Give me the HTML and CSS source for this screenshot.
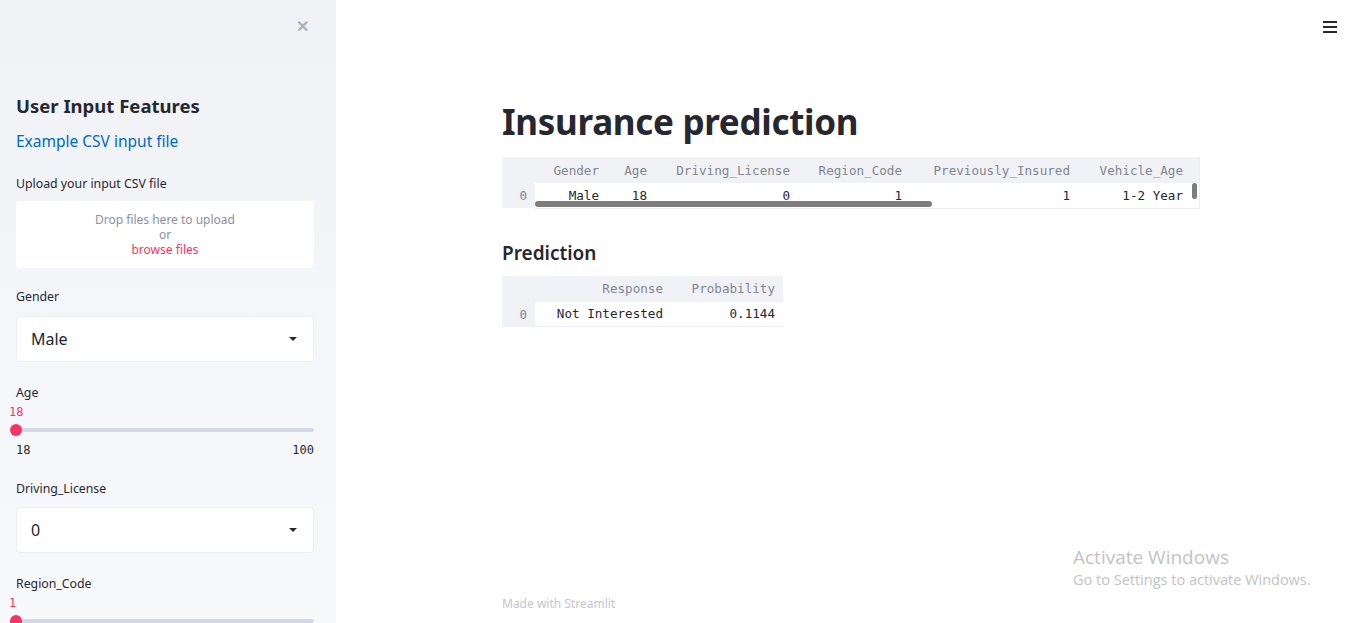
FILE: index.html
```html
<!DOCTYPE html>
<html>
<head>
<meta charset="utf-8">
<link rel="stylesheet" href="styles.css">
</head>
<body>
<div class="app">
  <aside class="sidebar">
    <div class="close-row"><span class="close">&#x2715;</span></div>
    <h3 class="side-title">User Input Features</h3>
    <a class="side-link" href="#">Example CSV input file</a>
    <div class="label upload-label">Upload your input CSV file</div>
    <div class="dropzone">
      <div>Drop files here to upload</div>
      <div>or</div>
      <div class="browse">browse files</div>
    </div>
    <div class="label">Gender</div>
    <div class="select"><span>Male</span><span class="caret"></span></div>
    <div class="label after-select">Age</div>
    <div class="slider">
      <div class="slider-val">18</div>
      <div class="track"><span class="thumb"></span></div>
      <div class="ticks"><span>18</span><span>100</span></div>
    </div>
    <div class="label after-slider">Driving_License</div>
    <div class="select select-tight"><span>0</span><span class="caret"></span></div>
    <div class="label after-select">Region_Code</div>
    <div class="slider">
      <div class="slider-val">1</div>
      <div class="track"><span class="thumb"></span></div>
    </div>
  </aside>
  <main class="main">
    <div class="menu"><span></span><span></span><span></span></div>
    <div class="block">
      <h1 class="title">Insurance prediction</h1>
      <div class="df df-wide">
        <table class="t-wide">
          <thead><tr><th class="idx"></th><th class="c-g">Gender</th><th class="c-a">Age</th><th class="c-dl">Driving_License</th><th class="c-rc">Region_Code</th><th class="c-pi">Previously_Insured</th><th class="c-va">Vehicle_Age</th><th class="c-x"></th></tr></thead>
          <tbody><tr><td class="idx">0</td><td>Male</td><td>18</td><td>0</td><td>1</td><td>1</td><td>1-2 Year</td><td></td></tr></tbody>
        </table>
        <span class="hscroll"></span>
        <span class="vscroll"></span>
      </div>
      <h3 class="subtitle">Prediction</h3>
      <div class="df">
        <table class="t-pred">
          <thead><tr><th class="idx"></th><th class="c-resp">Response</th><th class="c-prob">Probability</th></tr></thead>
          <tbody><tr><td class="idx">0</td><td>Not Interested</td><td>0.1144</td></tr></tbody>
        </table>
      </div>
      <div class="spacer"></div>
      <div class="footer">Made with <span>Streamlit</span></div>
    </div>
    <div class="watermark">
      <div class="wm1">Activate Windows</div>
      <div class="wm2">Go to Settings to activate Windows.</div>
    </div>
  </main>
</div>
</body>
</html>
```
FILE: styles.css
```css
* { box-sizing: border-box; }
html, body { margin: 0; padding: 0; height: 100%; }
body {
  font-family: "Noto Sans", "Open Sans", sans-serif;
  color: #262730;
  background: #fff;
  overflow: hidden;
}
.app { display: flex; height: 623px; }

.sidebar {
  width: 336px;
  flex: 0 0 336px;
  height: 623px;
  overflow: hidden;
  background: linear-gradient(180deg, #f0f2f6 0%, #f8f9fb 100%);
  padding: 0 22px 0 16px;
  display: flex;
  flex-direction: column;
}
.close-row { display: flex; justify-content: flex-end; padding-top: 16px; height: 96px; }
.close { color: #b0b1b6; font-size: 16px; font-weight: 700; line-height: 20px; margin-right: 5px; }
.side-title { font-size: 18.5px; font-weight: 700; margin: 0; line-height: 22px; color: #262730; }
.side-link { color: #0068c9; text-decoration: none; font-size: 15.5px; line-height: 22px; margin-top: 13px; }
.label { font-size: 12.3px; line-height: 18px; color: #262730; margin-top: 20px; }
.upload-label { margin-top: 23px; }
.after-select { margin-top: 22px; }
.after-slider { margin-top: 23px; }
.dropzone {
  margin-top: 8px;
  background: #fff;
  border-radius: 4px;
  height: 68px;
  display: flex;
  flex-direction: column;
  justify-content: center;
  align-items: center;
  font-size: 12px;
  line-height: 15px;
  color: #8a8fa3;
}
.browse { color: #f63366; }
.select {
  margin-top: 10px;
  height: 47px;
  background: #fff;
  border: 1px solid #eceef3;
  border-radius: 4px;
  display: flex;
  align-items: center;
  justify-content: space-between;
  padding: 0 16px 0 14px;
  font-size: 16px;
}
.select-tight { margin-top: 9px; }
.caret { width: 0; height: 0; border-left: 4px solid transparent; border-right: 4px solid transparent; border-top: 4px solid #262730; }
.slider { display: flex; flex-direction: column; }
.slider-val { font-family: "DejaVu Sans Mono", monospace; font-size: 12px; color: #f63366; line-height: 14px; margin-top: 3px; margin-left: -7px; }
.track { position: relative; height: 4px; background: #d5d8e0; border-radius: 2px; margin-top: 9px; }
.thumb { position: absolute; left: -6px; top: -4px; width: 12px; height: 12px; border-radius: 50%; background: #f63366; }
.ticks { display: flex; justify-content: space-between; font-family: "DejaVu Sans Mono", monospace; font-size: 12px; line-height: 14px; margin-top: 11px; }

.main { flex: 1; position: relative; display: flex; justify-content: center; }
.menu { position: absolute; right: 29px; top: 21px; display: flex; flex-direction: column; gap: 3px; }
.menu span { display: block; width: 14px; height: 2px; background: #262730; }
.block { width: 698px; display: flex; flex-direction: column; padding-top: 100px; }
.title { font-size: 35px; font-weight: 700; margin: 0; line-height: 44px; color: #262730; letter-spacing: -0.3px; }
.subtitle { font-size: 19px; font-weight: 600; margin: 32px 0 0 0; line-height: 24px; }

.df { position: relative; overflow: hidden; align-self: flex-start; }
.df-wide { width: 698px; margin-top: 13px; border-right: 1px solid #eceef3; }
.subtitle + .df { margin-top: 11px; }
table { border-collapse: collapse; table-layout: fixed; font-family: "DejaVu Sans Mono", monospace; font-size: 12.6px; }
.t-wide { width: 697px; }
.t-pred { width: 281px; }
th { height: 26px; background: #f0f2f6; color: #82868f; font-weight: 400; text-align: right; padding: 0 8px; white-space: nowrap; }
td { height: 25px; text-align: right; padding: 0 8px; background: #fff; border-bottom: 1px solid #eceef3; white-space: nowrap; color: #262730; }
td.idx { background: #f0f2f6; color: #82868f; border-bottom: none; }
.idx { width: 33px; }
.c-g { width: 72px; }
.c-a { width: 48px; }
.c-dl { width: 143px; }
.c-rc { width: 112px; }
.c-pi { width: 168px; }
.c-va { width: 113px; }
.c-x { width: 8px; padding: 0; }
.c-resp { width: 136px; }
.c-prob { width: 112px; }
.hscroll { position: absolute; left: 33px; top: 44px; width: 397px; height: 6px; border-radius: 3px; background: #7d7d7d; }
.vscroll { position: absolute; right: 2px; top: 26px; width: 5px; height: 16px; border-radius: 3px; background: #7d7d7d; }

.spacer { flex: 1; }
.footer { font-size: 12px; color: #c4c6d0; line-height: 16px; margin-bottom: 11px; }
.watermark { position: absolute; left: 737px; top: 544px; color: #c3c3c3; font-family: "Open Sans", "Noto Sans", sans-serif; }
.wm1 { font-size: 19px; line-height: 26px; }
.wm2 { font-size: 14.5px; line-height: 20px; }
```
